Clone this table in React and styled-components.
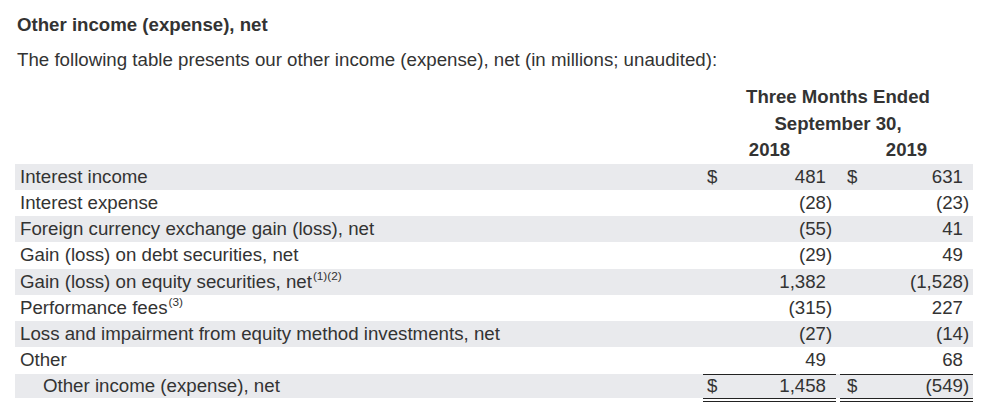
import styled, { createGlobalStyle } from "styled-components";

const GlobalStyle = createGlobalStyle`
  html, body {
    margin: 0;
    padding: 0;
    background: #fff;
  }
  body {
    font-family: "Liberation Sans", Arial, sans-serif;
    color: #333;
  }
`;

const Page = styled.div`
  width: 1000px;
  height: 404px;
  overflow: hidden;
  padding: 12px 0 0 15px;
  box-sizing: border-box;
`;

const Title = styled.h3`
  margin: 0 0 9px 2px;
  font-size: 18.65px;
  line-height: 26px;
  font-weight: bold;
`;

const Intro = styled.p`
  margin: 0 0 11px 2px;
  font-size: 18.7px;
  line-height: 26px;
`;

const Grid = styled.div`
  width: 958px;
  display: grid;
  grid-template-columns: 688px 133px 4px 133px;
`;

const HeadLine = styled.div`
  grid-column: ${(p) => p.$span || "2 / 5"};
  text-align: center;
  font-size: 18.6px;
  font-weight: bold;
  line-height: 26.5px;
`;

const Row = styled.div`
  grid-column: 1 / 5;
  display: grid;
  grid-template-columns: subgrid;
  height: ${(p) => (p.$total ? "24px" : "26.25px")};
  background: ${(p) => (p.$shaded ? "#e9eaed" : "transparent")};
  font-size: 18.7px;
  line-height: ${(p) => (p.$total ? "24px" : "26.25px")};
`;

const Label = styled.div`
  padding-left: ${(p) => (p.$indent ? "28px" : "5px")};
  white-space: nowrap;
`;

const Note = styled.sup`
  font-size: 11.8px;
  line-height: 0;
  vertical-align: 8px;
  margin-left: 1px;
`;

const Amount = styled.div`
  display: flex;
  padding-left: ${(p) => p.$pad || 4}px;
  box-sizing: border-box;
  border-top: ${(p) => (p.$total ? "1.5px solid #222" : "none")};
  border-bottom: ${(p) => (p.$total ? "4px double #222" : "none")};
  height: ${(p) => (p.$total ? "28px" : "auto")};
  line-height: ${(p) => (p.$total ? "22.5px" : "inherit")};
`;

const Dollar = styled.span`
  width: 14px;
`;

const Value = styled.span`
  flex: 1;
  text-align: right;
`;

const Paren = styled.span`
  width: 10px;
  flex: none;
`;

const rows = [
  { label: "Interest income", a: "481", b: "631", dollar: true },
  { label: "Interest expense", a: "(28)", b: "(23)" },
  { label: "Foreign currency exchange gain (loss), net", a: "(55)", b: "41" },
  { label: "Gain (loss) on debt securities, net", a: "(29)", b: "49" },
  { label: "Gain (loss) on equity securities, net", note: "(1)(2)", a: "1,382", b: "(1,528)" },
  { label: "Performance fees", note: "(3)", a: "(315)", b: "227" },
  { label: "Loss and impairment from equity method investments, net", a: "(27)", b: "(14)" },
  { label: "Other", a: "49", b: "68" },
];

function Cell({ value, dollar, pad, total }) {
  const neg = value.endsWith(")");
  return (
    <Amount $pad={pad} $total={total}>
      <Dollar>{dollar ? "$" : ""}</Dollar>
      <Value>{neg ? value.slice(0, -1) : value}</Value>
      <Paren>{neg ? ")" : ""}</Paren>
    </Amount>
  );
}

export default function App() {
  return (
    <Page>
      <GlobalStyle />
      <Title>Other income (expense), net</Title>
      <Intro>
        The following table presents our other income (expense), net (in millions; unaudited):
      </Intro>
      <Grid>
        <HeadLine>Three Months Ended</HeadLine>
        <HeadLine>September 30,</HeadLine>
        <HeadLine $span="2 / 3">2018</HeadLine>
        <HeadLine $span="4 / 5">2019</HeadLine>
        {rows.map((r, i) => (
          <Row key={r.label} $shaded={i % 2 === 0}>
            <Label>
              {r.label}
              {r.note && <Note>{r.note}</Note>}
            </Label>
            <Cell value={r.a} dollar={r.dollar} pad={4} />
            <div />
            <Cell value={r.b} dollar={r.dollar} pad={7} />
          </Row>
        ))}
        <Row $shaded $total>
          <Label $indent>Other income (expense), net</Label>
          <Cell value="1,458" dollar pad={4} total />
          <div />
          <Cell value="(549)" dollar pad={7} total />
        </Row>
      </Grid>
    </Page>
  );
}
